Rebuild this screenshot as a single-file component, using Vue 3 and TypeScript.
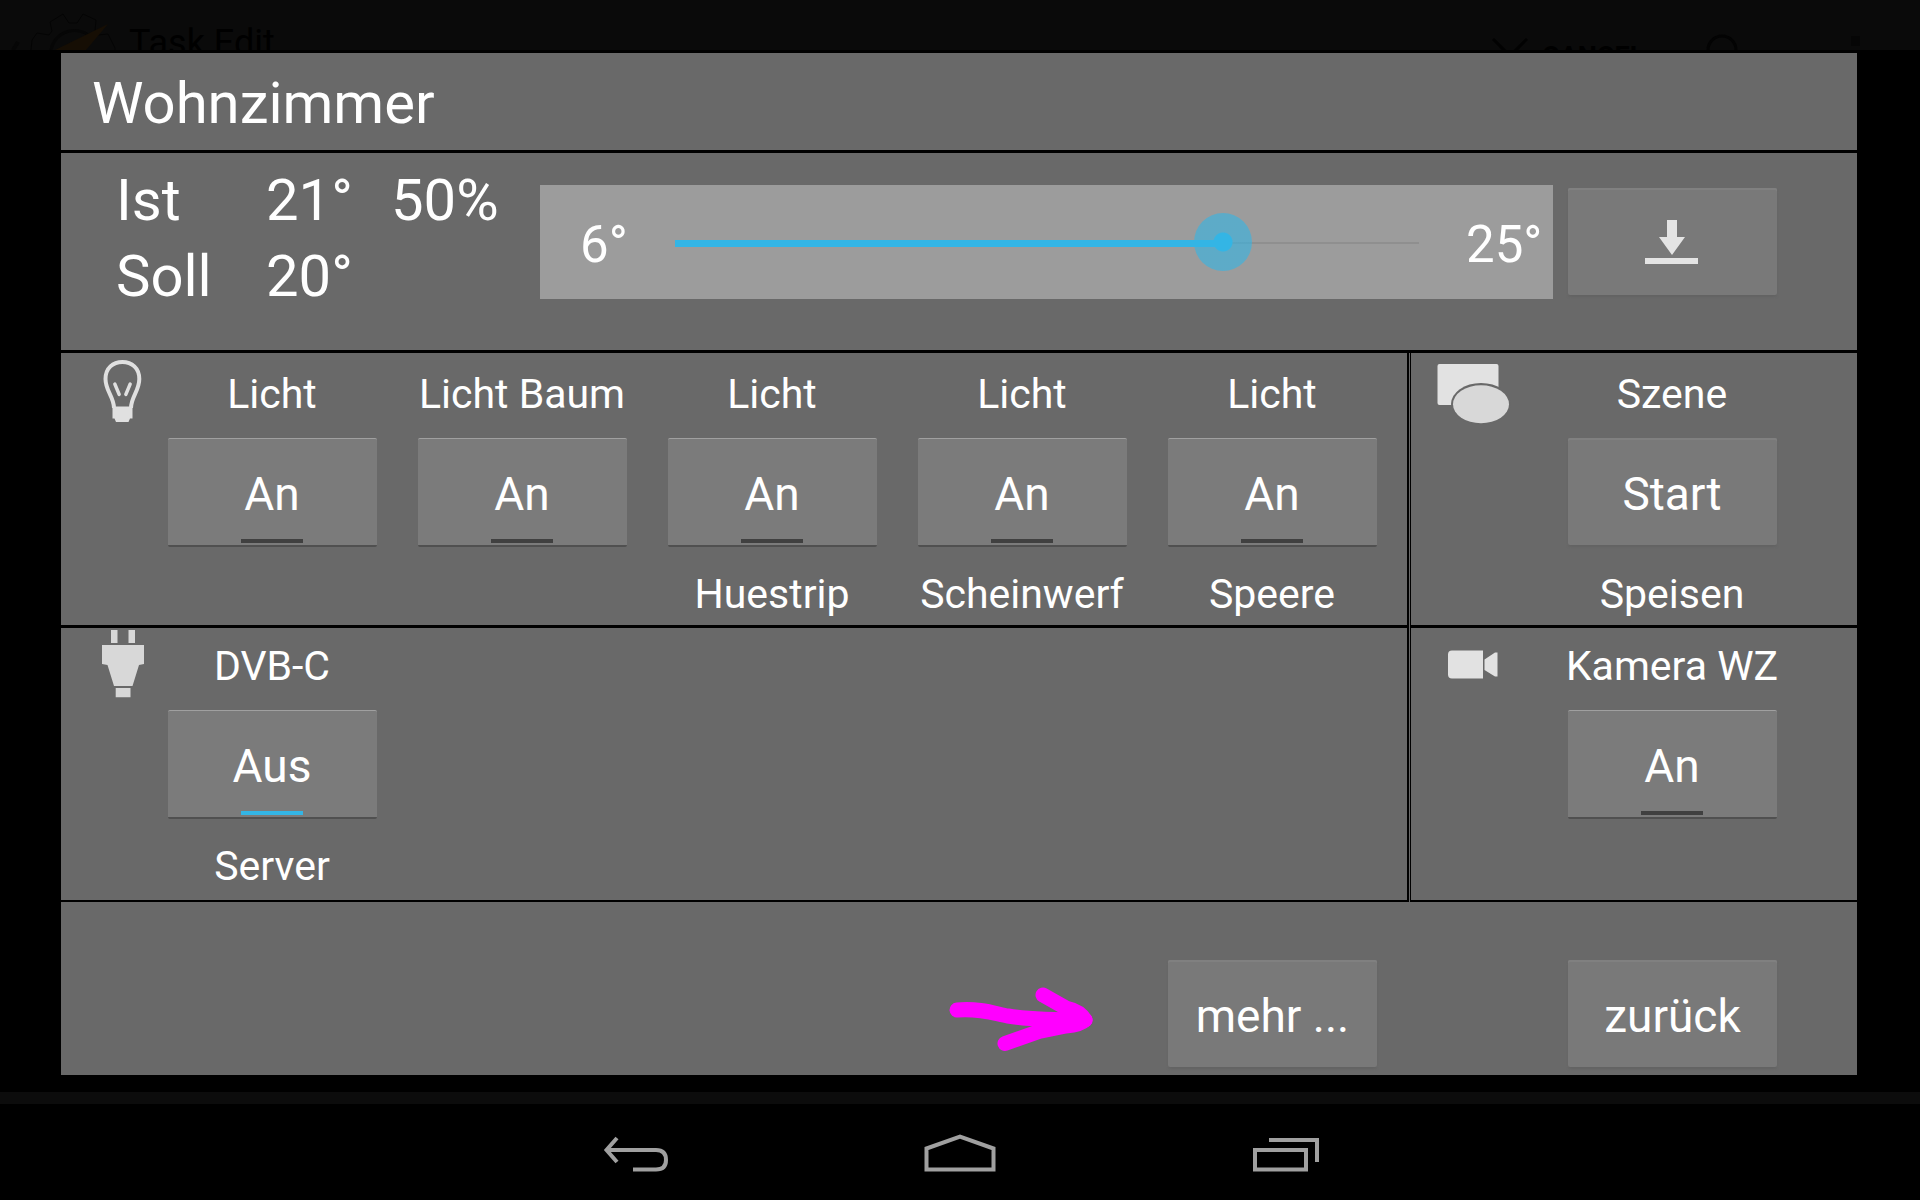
<script setup lang="ts">
import { computed, reactive, ref } from 'vue'

interface Device {
  top: string
  bottom: string
  on: boolean
}

const MIN = 6
const MAX = 25

const target = ref(20)
const fill = computed(() => (target.value - MIN) / (MAX - MIN))

const lights = reactive<Device[]>([
  { top: 'Licht', bottom: '', on: false },
  { top: 'Licht Baum', bottom: '', on: false },
  { top: 'Licht', bottom: 'Huestrip', on: false },
  { top: 'Licht', bottom: 'Scheinwerf', on: false },
  { top: 'Licht', bottom: 'Speere', on: false },
])
const server = reactive<Device>({ top: 'DVB-C', bottom: 'Server', on: true })
const camera = reactive<Device>({ top: 'Kamera WZ', bottom: '', on: false })

const caption = (d: Device): string => (d.on ? 'Aus' : 'An')
</script>

<template>
  <div class="screen">
    <div class="backdrop">
      <svg class="gear" width="120" height="50" viewBox="0 0 120 50" aria-hidden="true">
        <path d="M31 50L32 40L37 33L49 35L52 31L50 22L63 14L69 23H77L83 14L96 20L95 31L98 35L108 34L115 48V50" fill="none" stroke="#040404" stroke-width="1" />
        <path d="M51 50A24 24 0 0 1 92 38" fill="none" stroke="#060606" stroke-width="3" />
        <path d="M108 24L86 50H55Z" fill="#160e04" />
        <path d="M18 42L13 50" stroke="#060606" stroke-width="4" />
      </svg>
      <span class="app-name">Task Edit</span>
      <svg class="cross" width="36" height="50" viewBox="0 0 36 50" aria-hidden="true">
        <path d="M1 39L18 56L35 39" fill="none" stroke="#020202" stroke-width="3" />
      </svg>
      <span class="cancel">CANCEL</span>
      <svg class="tools" width="160" height="50" viewBox="0 0 160 50" aria-hidden="true">
        <circle cx="22" cy="50" r="14" fill="none" stroke="#030303" stroke-width="3" />
        <rect x="151" y="36" width="10" height="10" fill="#060606" />
      </svg>
    </div>

    <main class="panel">
      <h1 class="title">Wohnzimmer</h1>

      <section class="heating">
        <dl class="readings">
          <dt>Ist</dt>
          <dd>21°</dd>
          <dd>50%</dd>
          <dt>Soll</dt>
          <dd>{{ target }}°</dd>
        </dl>
        <div class="slider">
          <label class="low" for="target">6°</label>
          <input id="target" v-model.number="target" type="range" :min="MIN" :max="MAX" :style="{ '--fill': fill }" />
          <span class="high">25°</span>
        </div>
        <button type="button" class="btn plain send" aria-label="Übernehmen">
          <svg width="57" height="47" viewBox="0 0 57 47" aria-hidden="true">
            <path d="M23 2H33V19H41L28 37L15 19H23ZM1 40H54V46H1Z" fill="#e4e4e4" />
          </svg>
        </button>
      </section>

      <div class="rooms">
        <section class="group lights">
          <svg class="icon" width="122" height="84" viewBox="0 0 122 84" aria-hidden="true">
            <g fill="none" stroke="#e0e0e0" stroke-width="4">
              <path d="M53 55C53 44 44.500 38 44.500 26C44.500 15 52 9 61.400 9S78.300 15 78.300 26C78.300 38 70 44 70 55" />
              <path d="M53.800 31L58.200 41.500M69.200 31L64.800 41.500" stroke-width="3.400" stroke-linecap="round" />
            </g>
            <path d="M51.500 53.500H71.500V65.500H69L67.500 69H55L53.500 65.500H51.500Z" fill="#e0e0e0" />
          </svg>
          <div v-for="(d, i) in lights" :key="i" class="cell">
            <span class="name">{{ d.top }}</span>
            <button type="button" class="btn toggle" :class="{ on: d.on }" :aria-pressed="d.on" @click="d.on = !d.on">
              {{ caption(d) }}
            </button>
            <span class="name">{{ d.bottom }}</span>
          </div>
        </section>

        <section class="group side">
          <svg class="icon" width="124" height="84" viewBox="0 0 124 84" aria-hidden="true">
            <rect x="26.5" y="11" width="61" height="41" rx="2" fill="#e2e2e2" />
            <ellipse cx="70" cy="51" rx="30" ry="21" fill="#696969" />
            <ellipse cx="70" cy="51.2" rx="28" ry="19" fill="#d8d8d8" />
          </svg>
          <div class="cell">
            <span class="name">Szene</span>
            <button type="button" class="btn plain">Start</button>
            <span class="name">Speisen</span>
          </div>
        </section>

        <section class="group lights last">
          <svg class="icon" width="122" height="84" viewBox="0 0 122 84" aria-hidden="true">
            <path d="M50 2H56.5V15H50ZM67.5 2H74V15H67.5ZM41 17H83V36L78 37L71.5 58H53L46.5 37L41 36ZM54.7 60H69.5V69.3H54.7Z" fill="#d8d8d8" />
          </svg>
          <div class="cell">
            <span class="name">{{ server.top }}</span>
            <button type="button" class="btn toggle" :class="{ on: server.on }" :aria-pressed="server.on" @click="server.on = !server.on">
              {{ caption(server) }}
            </button>
            <span class="name">{{ server.bottom }}</span>
          </div>
        </section>

        <section class="group side last">
          <svg class="icon" width="124" height="84" viewBox="0 0 124 84" aria-hidden="true">
            <path d="M41 22.5H72V50.5H41Q37 50.5 37 46.5V26.5Q37 22.5 41 22.5ZM73.5 31.5L84 24.5H86.5V48.5H84L73.5 42Z" fill="#e2e2e2" />
          </svg>
          <div class="cell">
            <span class="name">{{ camera.top }}</span>
            <button type="button" class="btn toggle" :class="{ on: camera.on }" :aria-pressed="camera.on" @click="camera.on = !camera.on">
              {{ caption(camera) }}
            </button>
            <span class="name">{{ camera.bottom }}</span>
          </div>
        </section>
      </div>

      <footer class="actions">
        <svg class="pointer" width="150" height="80" viewBox="0 0 150 80" aria-hidden="true">
          <g fill="none" stroke="#ff00ff" stroke-width="15" stroke-linecap="round" stroke-linejoin="round">
            <path d="M11 30C35 28 50 34 62 36C80 39 110 40 139 40" />
            <path d="M97 15L120 28Q134 31 139 40Q134 45 120 46L93 51.5L59 63.5" />
            <path d="M120 34L130 40" />
          </g>
        </svg>
        <button type="button" class="btn plain">mehr ...</button>
        <button type="button" class="btn plain back">zurück</button>
      </footer>
    </main>

    <div class="strip"></div>

    <nav class="navbar">
      <button type="button" aria-label="Zurück">
        <svg width="96" height="96" viewBox="0 0 96 96" aria-hidden="true">
          <path d="M29 34L18.5 46L29 58M18.5 46H68C75 46 78 50 78 56S75 65.500 68 65.500H45" />
        </svg>
      </button>
      <button type="button" aria-label="Startseite">
        <svg width="96" height="96" viewBox="0 0 96 96" aria-hidden="true">
          <path d="M14.500 65.500V44.500L48 32.500L81.500 44.500V65.500Z" />
        </svg>
      </button>
      <button type="button" aria-label="Letzte Apps">
        <svg width="96" height="96" viewBox="0 0 96 96" aria-hidden="true">
          <path d="M19 46H70V65.500H19ZM33 36H81V58" />
        </svg>
      </button>
    </nav>
  </div>
</template>

<style>
body {
  margin: 0;
  background: #000;
}
</style>

<style scoped>
.screen {
  display: flex;
  flex-direction: column;
  min-height: 100vh;
  background: #000;
  color: #fff;
  font-family: Roboto, "Liberation Sans", sans-serif;
}

.backdrop {
  display: flex;
  align-items: flex-start;
  height: 50px;
  margin-bottom: 3px;
  overflow: hidden;
  background: #0a0a0a;
  color: #000;
}

.gear {
  flex: none;
  margin-right: 9px;
}

.app-name {
  flex: 1;
  padding-top: 18px;
  font-size: 36px;
  line-height: 50px;
}

.cross {
  margin-right: 14px;
}

.cancel {
  width: 158px;
  padding-top: 41px;
  font-size: 27px;
  font-weight: 700;
  line-height: 32px;
}

.tools {
  margin-right: 60px;
}

.panel {
  margin: 0 63px 0 61px;
  background: #696969;
}

.title {
  margin: 0;
  padding: 12px 31px 9px;
  border-bottom: 3px solid #000;
  font-size: 58px;
  font-weight: 400;
  line-height: 76px;
}

.heating {
  display: flex;
  align-items: flex-start;
  padding: 9px 80px 36px 55px;
  border-bottom: 3px solid #000;
}

.readings {
  display: grid;
  grid-template-columns: 150px 125px 149px;
  margin: 0;
  font-size: 58px;
  line-height: 76px;
}

.readings dd {
  margin: 0;
}

.slider {
  display: flex;
  flex: 1;
  align-items: center;
  box-sizing: border-box;
  height: 114px;
  margin: 23px 15px 0 0;
  padding: 0 11px 0 40px;
  background: #9c9c9c;
  font-size: 51px;
  line-height: 60px;
}

.low {
  width: 66px;
  padding-top: 6px;
}

.high {
  width: 76px;
  margin-left: 18px;
  padding-top: 6px;
}

.slider input {
  flex: 1;
  min-width: 0;
  height: 58px;
  margin: 0;
  appearance: none;
  background:
    linear-gradient(#33b5e5, #33b5e5) 29px 27px / calc((100% - 58px) * var(--fill)) 7px no-repeat,
    linear-gradient(#8f8f8f, #8f8f8f) 29px 29px / calc(100% - 58px) 2px no-repeat;
}

.slider input::-webkit-slider-thumb {
  width: 58px;
  height: 58px;
  appearance: none;
  border-radius: 50%;
  background: radial-gradient(circle, #33b5e5 9px, rgba(51, 181, 229, 0.6) 10px);
}

.btn {
  box-sizing: border-box;
  width: 209px;
  padding: 4px 0 0;
  border: 0;
  border-radius: 2px;
  color: #fff;
  font-family: inherit;
  font-size: 46px;
  line-height: 56px;
}

.plain {
  height: 107px;
  margin-bottom: 2px;
  background: #797979;
  box-shadow: inset 0 2px #808080, 0 2px 2px #646464;
}

.send {
  display: flex;
  align-items: center;
  justify-content: center;
  margin-top: 26px;
  padding: 0;
}

.toggle {
  height: 109px;
  border-top: 1px solid #a0a0a0;
  border-bottom: 2px solid #505050;
  background: linear-gradient(#404040, #404040) center bottom 2px / 62px 4px no-repeat #7b7b7b;
}

.toggle.on {
  background-image: linear-gradient(#33b5e5, #33b5e5);
}

.rooms {
  display: grid;
  grid-template-columns: 1fr 447px;
  column-gap: 1px;
}

.group {
  display: grid;
  align-items: start;
  border-bottom: 3px solid #000;
}

.group.last {
  border-bottom-width: 2px;
}

.lights {
  grid-template-columns: 86px repeat(5, 1fr);
  padding-right: 10px;
  border-right: 2px solid #000;
}

.side {
  grid-template-columns: 136px 250px;
  border-left: 1px solid #000;
}

.cell {
  display: flex;
  flex-direction: column;
  align-items: center;
  padding: 11px 0 1px;
}

.last .cell {
  padding: 8px 0 4px;
}

.name {
  height: 60px;
  font-size: 41px;
  line-height: 60px;
  white-space: nowrap;
}

.cell .btn {
  margin-top: 14px;
}

.name:last-child {
  margin-top: 17px;
}

.actions {
  display: flex;
  align-items: flex-start;
  justify-content: flex-end;
  padding: 58px 80px 6px 0;
}

.pointer {
  margin: 20px 72px 0 0;
}

.back {
  margin-left: 191px;
}

.strip {
  height: 12px;
  margin-top: 17px;
  background: #0c0c0c;
}

.navbar {
  display: flex;
  justify-content: center;
  height: 96px;
}

.navbar button {
  width: 324px;
  padding: 0;
  border: 0;
  background: none;
}

.navbar svg {
  display: block;
  margin: 0 auto;
  fill: none;
  stroke: #a0a0a0;
  stroke-width: 4;
}
</style>
